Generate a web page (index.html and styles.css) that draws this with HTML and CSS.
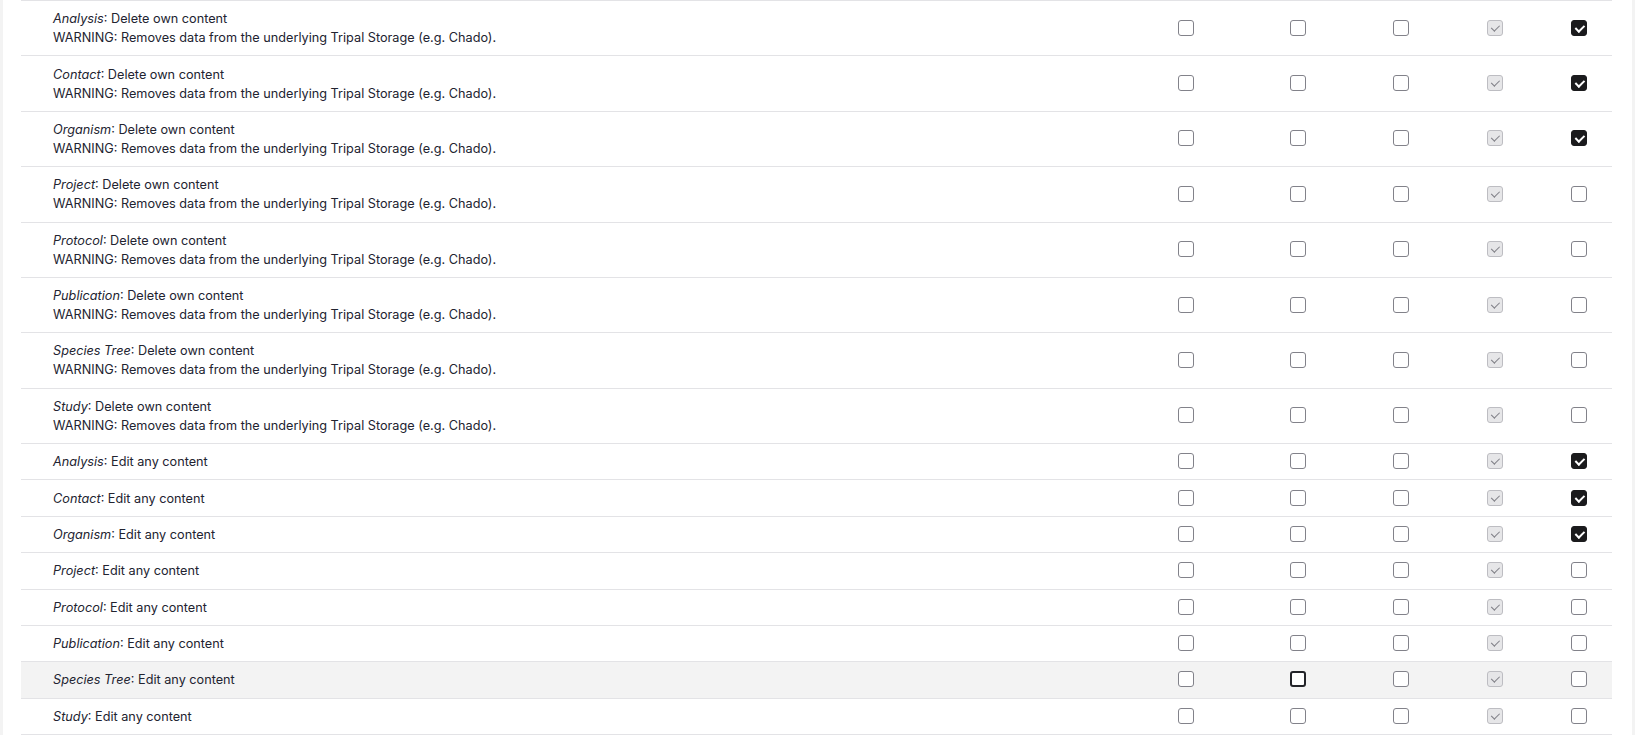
FILE: index.html
```html
<!DOCTYPE html>
<html lang="en">
<head>
  <meta charset="UTF-8">
  <title>Permissions</title>
  <link rel="stylesheet" href="styles.css">
</head>
<body>
  <div class="card">
    <table class="permissions">
      <colgroup>
        <col class="col-name">
        <col class="col-1">
        <col class="col-2">
        <col class="col-3">
        <col class="col-4">
        <col class="col-5">
      </colgroup>
      <tbody>
        <tr>
          <td class="permission"><em>Analysis</em>: Delete own content<div class="description">WARNING: Removes data from the underlying Tripal Storage (e.g. Chado).</div></td>
          <td class="checkbox"><input type="checkbox"></td>
          <td class="checkbox"><input type="checkbox"></td>
          <td class="checkbox"><input type="checkbox"></td>
          <td class="checkbox"><input type="checkbox" checked disabled></td>
          <td class="checkbox"><input type="checkbox" checked></td>
        </tr>
        <tr>
          <td class="permission"><em>Contact</em>: Delete own content<div class="description">WARNING: Removes data from the underlying Tripal Storage (e.g. Chado).</div></td>
          <td class="checkbox"><input type="checkbox"></td>
          <td class="checkbox"><input type="checkbox"></td>
          <td class="checkbox"><input type="checkbox"></td>
          <td class="checkbox"><input type="checkbox" checked disabled></td>
          <td class="checkbox"><input type="checkbox" checked></td>
        </tr>
        <tr>
          <td class="permission"><em>Organism</em>: Delete own content<div class="description">WARNING: Removes data from the underlying Tripal Storage (e.g. Chado).</div></td>
          <td class="checkbox"><input type="checkbox"></td>
          <td class="checkbox"><input type="checkbox"></td>
          <td class="checkbox"><input type="checkbox"></td>
          <td class="checkbox"><input type="checkbox" checked disabled></td>
          <td class="checkbox"><input type="checkbox" checked></td>
        </tr>
        <tr>
          <td class="permission"><em>Project</em>: Delete own content<div class="description">WARNING: Removes data from the underlying Tripal Storage (e.g. Chado).</div></td>
          <td class="checkbox"><input type="checkbox"></td>
          <td class="checkbox"><input type="checkbox"></td>
          <td class="checkbox"><input type="checkbox"></td>
          <td class="checkbox"><input type="checkbox" checked disabled></td>
          <td class="checkbox"><input type="checkbox"></td>
        </tr>
        <tr>
          <td class="permission"><em>Protocol</em>: Delete own content<div class="description">WARNING: Removes data from the underlying Tripal Storage (e.g. Chado).</div></td>
          <td class="checkbox"><input type="checkbox"></td>
          <td class="checkbox"><input type="checkbox"></td>
          <td class="checkbox"><input type="checkbox"></td>
          <td class="checkbox"><input type="checkbox" checked disabled></td>
          <td class="checkbox"><input type="checkbox"></td>
        </tr>
        <tr>
          <td class="permission"><em>Publication</em>: Delete own content<div class="description">WARNING: Removes data from the underlying Tripal Storage (e.g. Chado).</div></td>
          <td class="checkbox"><input type="checkbox"></td>
          <td class="checkbox"><input type="checkbox"></td>
          <td class="checkbox"><input type="checkbox"></td>
          <td class="checkbox"><input type="checkbox" checked disabled></td>
          <td class="checkbox"><input type="checkbox"></td>
        </tr>
        <tr>
          <td class="permission"><em>Species Tree</em>: Delete own content<div class="description">WARNING: Removes data from the underlying Tripal Storage (e.g. Chado).</div></td>
          <td class="checkbox"><input type="checkbox"></td>
          <td class="checkbox"><input type="checkbox"></td>
          <td class="checkbox"><input type="checkbox"></td>
          <td class="checkbox"><input type="checkbox" checked disabled></td>
          <td class="checkbox"><input type="checkbox"></td>
        </tr>
        <tr>
          <td class="permission"><em>Study</em>: Delete own content<div class="description">WARNING: Removes data from the underlying Tripal Storage (e.g. Chado).</div></td>
          <td class="checkbox"><input type="checkbox"></td>
          <td class="checkbox"><input type="checkbox"></td>
          <td class="checkbox"><input type="checkbox"></td>
          <td class="checkbox"><input type="checkbox" checked disabled></td>
          <td class="checkbox"><input type="checkbox"></td>
        </tr>
        <tr>
          <td class="permission"><em>Analysis</em>: Edit any content</td>
          <td class="checkbox"><input type="checkbox"></td>
          <td class="checkbox"><input type="checkbox"></td>
          <td class="checkbox"><input type="checkbox"></td>
          <td class="checkbox"><input type="checkbox" checked disabled></td>
          <td class="checkbox"><input type="checkbox" checked></td>
        </tr>
        <tr>
          <td class="permission"><em>Contact</em>: Edit any content</td>
          <td class="checkbox"><input type="checkbox"></td>
          <td class="checkbox"><input type="checkbox"></td>
          <td class="checkbox"><input type="checkbox"></td>
          <td class="checkbox"><input type="checkbox" checked disabled></td>
          <td class="checkbox"><input type="checkbox" checked></td>
        </tr>
        <tr>
          <td class="permission"><em>Organism</em>: Edit any content</td>
          <td class="checkbox"><input type="checkbox"></td>
          <td class="checkbox"><input type="checkbox"></td>
          <td class="checkbox"><input type="checkbox"></td>
          <td class="checkbox"><input type="checkbox" checked disabled></td>
          <td class="checkbox"><input type="checkbox" checked></td>
        </tr>
        <tr>
          <td class="permission"><em>Project</em>: Edit any content</td>
          <td class="checkbox"><input type="checkbox"></td>
          <td class="checkbox"><input type="checkbox"></td>
          <td class="checkbox"><input type="checkbox"></td>
          <td class="checkbox"><input type="checkbox" checked disabled></td>
          <td class="checkbox"><input type="checkbox"></td>
        </tr>
        <tr>
          <td class="permission"><em>Protocol</em>: Edit any content</td>
          <td class="checkbox"><input type="checkbox"></td>
          <td class="checkbox"><input type="checkbox"></td>
          <td class="checkbox"><input type="checkbox"></td>
          <td class="checkbox"><input type="checkbox" checked disabled></td>
          <td class="checkbox"><input type="checkbox"></td>
        </tr>
        <tr>
          <td class="permission"><em>Publication</em>: Edit any content</td>
          <td class="checkbox"><input type="checkbox"></td>
          <td class="checkbox"><input type="checkbox"></td>
          <td class="checkbox"><input type="checkbox"></td>
          <td class="checkbox"><input type="checkbox" checked disabled></td>
          <td class="checkbox"><input type="checkbox"></td>
        </tr>
        <tr class="hover">
          <td class="permission"><em>Species Tree</em>: Edit any content</td>
          <td class="checkbox"><input type="checkbox"></td>
          <td class="checkbox"><input type="checkbox" class="focus"></td>
          <td class="checkbox"><input type="checkbox"></td>
          <td class="checkbox"><input type="checkbox" checked disabled></td>
          <td class="checkbox"><input type="checkbox"></td>
        </tr>
        <tr>
          <td class="permission"><em>Study</em>: Edit any content</td>
          <td class="checkbox"><input type="checkbox"></td>
          <td class="checkbox"><input type="checkbox"></td>
          <td class="checkbox"><input type="checkbox"></td>
          <td class="checkbox"><input type="checkbox" checked disabled></td>
          <td class="checkbox"><input type="checkbox"></td>
        </tr>
      </tbody>
    </table>
  </div>
</body>
</html>
```

FILE: styles.css
```css
html, body {
  margin: 0;
  height: 100%;
}

body {
  font-family: Inter, "Noto Sans", sans-serif;
  font-size: 12.7px;
  color: #222330;
  background-color: #f3f3f3;
  overflow: hidden;
}

.card {
  margin: 0 3px;
  padding: 0 20px 0 18px;
  min-height: 100%;
  background: #fff;
}

.permissions {
  width: 100%;
  table-layout: fixed;
  border-collapse: collapse;
  border-top: 1px solid #e3e3e6;
}

.col-1 { width: 104px; }
.col-2 { width: 120px; }
.col-3 { width: 86px; }
.col-4 { width: 102px; }
.col-5 { width: 66px; }

.permissions td {
  padding: 8.2px 0;
  line-height: 19px;
  border-bottom: 1px solid #e3e3e6;
  vertical-align: middle;
}

.permissions tr.hover td {
  background-color: #f3f3f3;
}

.permission {
  padding-left: 32px !important;
}

.permission em {
  font-style: italic;
}

.checkbox input {
  appearance: none;
  -webkit-appearance: none;
  position: relative;
  display: block;
  width: 16px;
  height: 16px;
  margin: -1px auto 0;
  border: 1px solid #82828a;
  border-radius: 3px;
  background: #fff;
  box-sizing: border-box;
}

.checkbox input.focus {
  border: 2px solid #232429;
}

.checkbox input:checked {
  background: #1b1b1d;
  border-color: #1b1b1d;
}

.checkbox input:checked::after {
  content: "";
  position: absolute;
  left: 4.6px;
  top: 2px;
  width: 3.5px;
  height: 7px;
  border: solid #fff;
  border-width: 0 2px 2px 0;
  transform: rotate(45deg);
}

.checkbox input:disabled:checked {
  background: #e6e6e8;
  border-color: #bdbdc2;
}

.checkbox input:disabled:checked::after {
  border-color: #7f7f86;
  border-width: 0 1.6px 1.6px 0;
}
```
